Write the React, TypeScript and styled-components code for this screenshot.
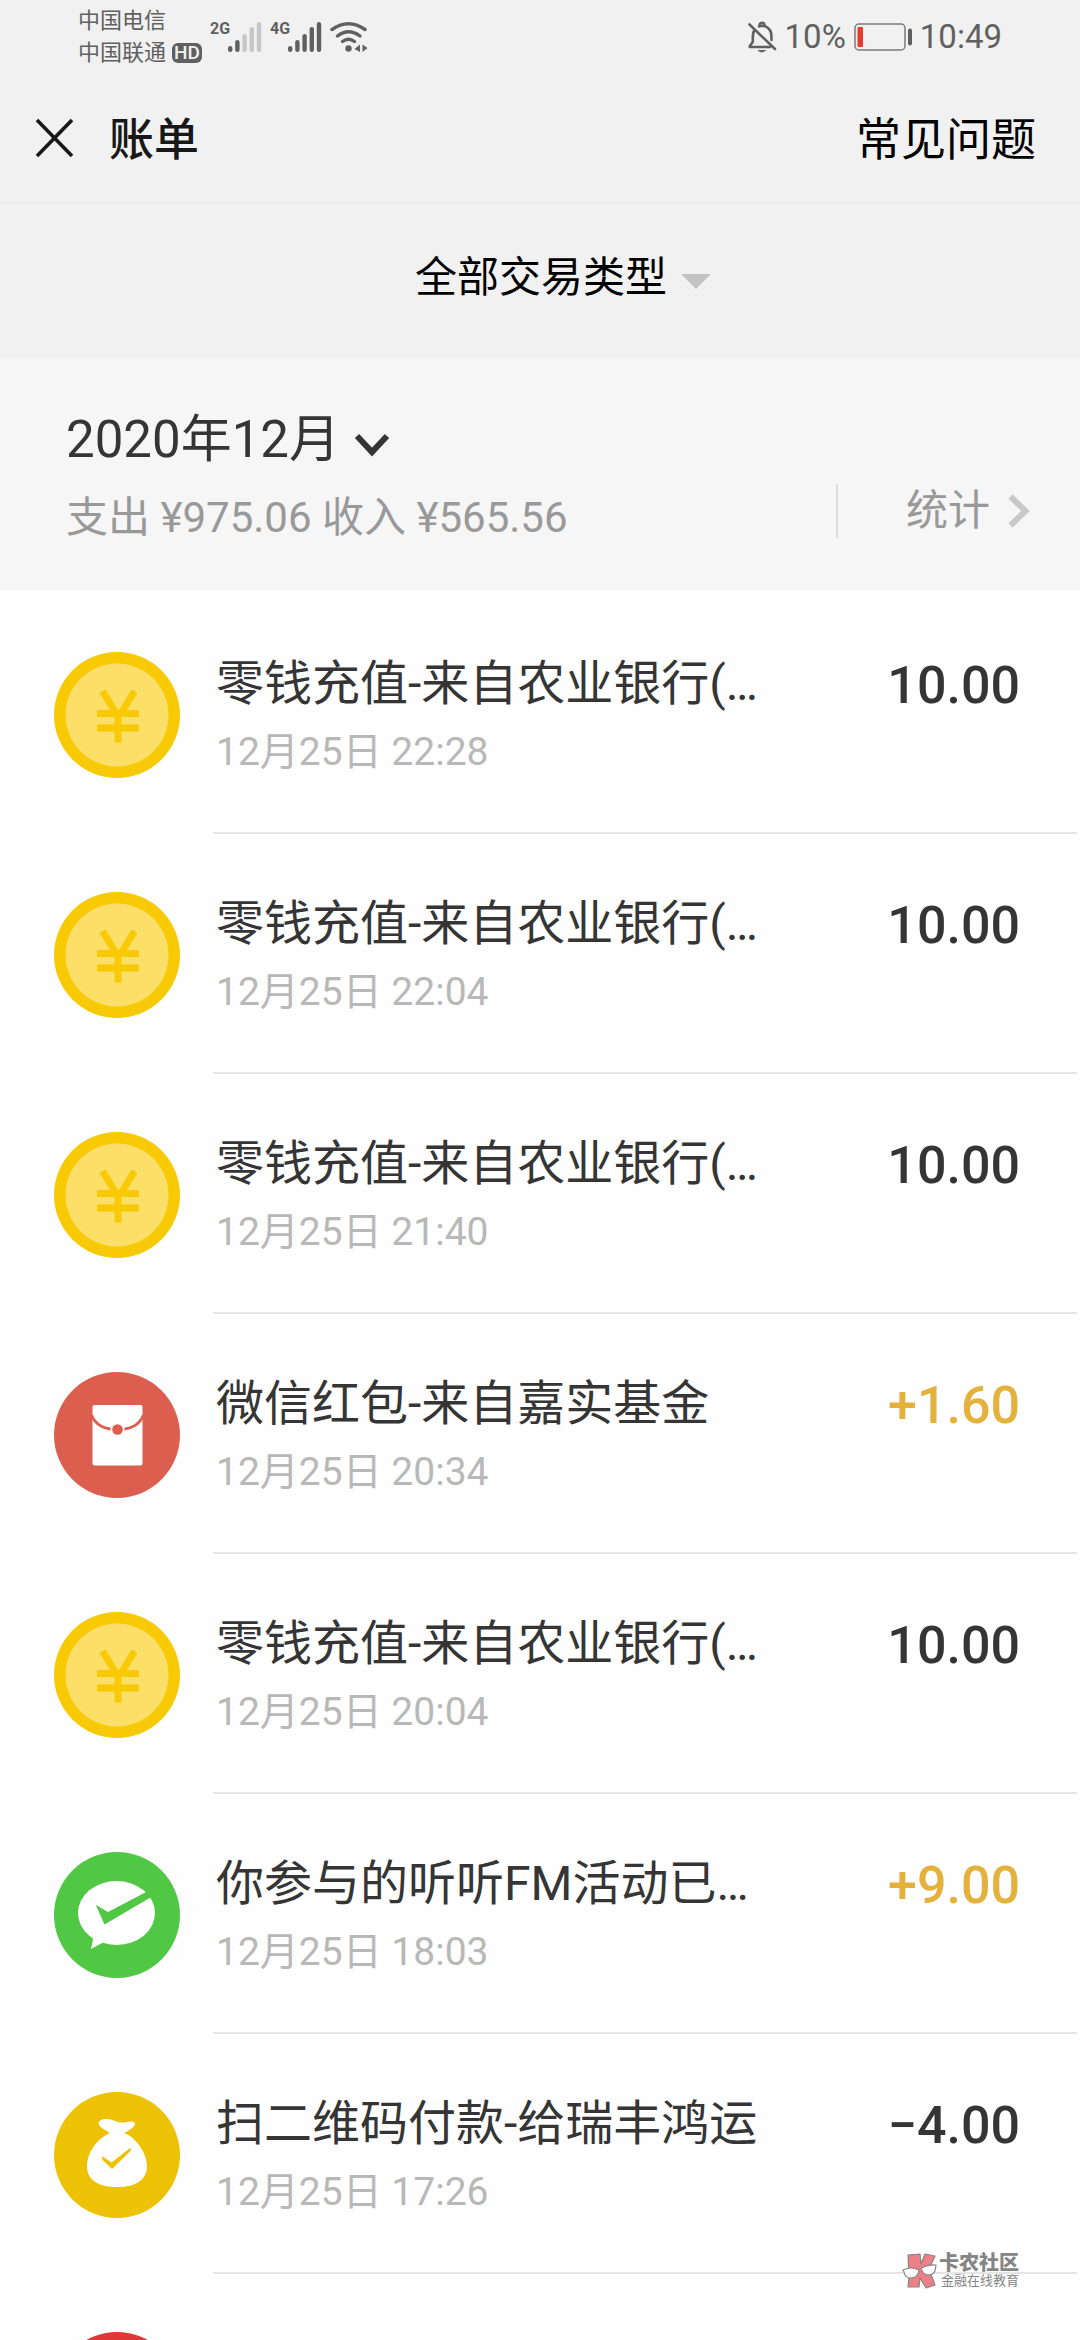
import React from "react";
import styled, { createGlobalStyle } from "styled-components";

const GlobalStyle = createGlobalStyle`
  * { box-sizing: border-box; }
  html, body { margin: 0; padding: 0; background: #fefefe; }
  body {
    font-family: Roboto, "Noto Sans CJK SC", sans-serif;
    color: #353535;
  }
  button {
    margin: 0;
    padding: 0;
    border: 0;
    background: none;
    font: inherit;
    color: inherit;
    cursor: pointer;
  }
`;

const Screen = styled.div`
  position: relative;
  display: flex;
  flex-direction: column;
  height: 100vh;
  overflow: hidden;
`;

/* ---------- status bar ---------- */

const StatusBar = styled.div`
  display: flex;
  align-items: center;
  justify-content: space-between;
  height: 74px;
  padding: 0 78px;
  background: #f1f1f1;
  color: #606060;
`;

const StatusGroup = styled.div<{ $gap: number }>`
  display: flex;
  align-items: center;
  gap: ${(p) => p.$gap}px;
`;

const Carriers = styled.div`
  display: flex;
  flex-direction: column;
  font-size: 22px;
  line-height: 32px;
`;

const CarrierLine = styled.div`
  display: flex;
  align-items: center;
  gap: 6px;
`;

const HdBadge = styled.span`
  width: 30px;
  border-radius: 6px;
  background: #606060;
  color: #f1f1f1;
  font-size: 19px;
  font-weight: 500;
  line-height: 20px;
  text-align: center;
`;

const Signal = styled.div`
  display: flex;
  align-items: flex-start;
`;

const NetworkLabel = styled.span`
  width: 18px;
  font-size: 16px;
  font-weight: 700;
  line-height: 16px;
`;

const StatusText = styled.span`
  font-size: 33px;
  line-height: 40px;
`;

function SignalBars({ level }: { level: number }) {
  const tops = [25, 19, 13, 6, 1];
  return (
    <svg width="34" height="32" viewBox="0 0 34 32" aria-hidden="true">
      {tops.map((top, i) => (
        <rect
          key={top}
          x={i * 7.2}
          y={top}
          width="4.4"
          height={31 - top}
          rx="2.2"
          fill={i < level ? "#606060" : "#c6c6c6"}
        />
      ))}
    </svg>
  );
}

function WifiIcon() {
  return (
    <svg width="38" height="32" viewBox="0 0 38 32" fill="none" stroke="#606060" strokeWidth="3.400" strokeLinecap="round" aria-hidden="true">
      <path d="M2 8.500Q18.500 -3 35 8.500" />
      <path d="M7.500 15Q18.500 6.500 30 15" />
      <path d="M12.500 20.500Q18.500 16 24.500 20.500" />
      <circle cx="18.500" cy="27.500" r="3.200" fill="#606060" stroke="none" />
      <path d="M24.500 28L30 23.500V31ZM32.500 23.500L37.500 27L32.500 31Z" fill="#606060" stroke="none" />
    </svg>
  );
}

function MutedBellIcon() {
  return (
    <svg width="29" height="32" viewBox="0 0 29 32" fill="none" stroke="#606060" strokeWidth="2.600" strokeLinecap="round" strokeLinejoin="round" aria-hidden="true">
      <path d="M1.500 3.500L27 28" />
      <path d="M6 10C4.800 12 4.800 14 4.800 17V21L1.800 25V26H22" />
      <path d="M11 5.500C12.500 4.600 17.500 4.600 20 7C23.500 10 23.500 13 23.500 19" />
      <path d="M11.500 4.500C11.500 1 16.500 1 16.500 4.500" />
      <path d="M10.500 29.500H17.500L14 31Z" strokeWidth="1" fill="#606060" />
    </svg>
  );
}

function BatteryIcon() {
  return (
    <svg width="58" height="28" viewBox="0 0 58 28" fill="none" aria-hidden="true">
      <rect x="1" y="1" width="50" height="26" rx="4" stroke="#7a7a7a" strokeWidth="1.500" />
      <rect x="3.500" y="4" width="5.500" height="20" rx="1" fill="#e53a2c" />
      <rect x="54" y="5.500" width="4" height="17" rx="2" fill="#606060" />
    </svg>
  );
}

/* ---------- navigation ---------- */

const NavBar = styled.header`
  display: flex;
  align-items: center;
  height: 130px;
  padding: 0 44px 0 35px;
  border-bottom: 2px solid #ececec;
  background: #f1f1f1;
`;

const CloseButton = styled.button`
  display: flex;
`;

const Title = styled.h1`
  flex: 1;
  margin: 0 0 0 35px;
  padding-top: 5px;
  color: #181818;
  font-size: 45px;
  font-weight: 500;
  line-height: 60px;
`;

const HelpButton = styled.button`
  padding-top: 5px;
  color: #000;
  font-size: 45px;
  line-height: 60px;
`;

const FilterBar = styled.div`
  display: flex;
  align-items: center;
  justify-content: center;
  height: 154px;
  padding: 0 0 6px 46px;
  background: #f1f1f1;
`;

const FilterButton = styled.button`
  display: flex;
  align-items: center;
  gap: 14px;
  color: #000;
  font-size: 42px;
  line-height: 56px;

  svg {
    margin-top: 6px;
  }
`;

/* ---------- month summary ---------- */

const Summary = styled.section`
  display: flex;
  align-items: flex-end;
  justify-content: space-between;
  height: 232px;
  padding: 0 50px 40px 66px;
  background: #f6f6f6;
`;

const MonthButton = styled.button`
  display: flex;
  align-items: center;
  gap: 14px;
  margin-bottom: 8px;
  color: #353535;
  font-size: 51px;
  line-height: 76px;

  svg {
    margin-top: 10px;
  }
`;

const Totals = styled.p`
  margin: 0;
  color: #999;
  font-size: 42px;
  line-height: 64px;
`;

const StatsButton = styled.button`
  display: flex;
  align-items: center;
  gap: 18px;
  height: 54px;
  margin-bottom: 12px;
  padding-left: 68px;
  border-left: 2px solid #dcdcdc;
  color: #999;
  font-size: 42px;
  line-height: 54px;
`;

/* ---------- bill list ---------- */

const List = styled.ul`
  flex: 1;
  margin: 0;
  padding: 4px 3px 0 54px;
  overflow: hidden;
  background: #fefefe;
  list-style: none;
`;

const Row = styled.li`
  display: flex;
  gap: 33px;
  height: 240px;
`;

const IconSlot = styled.div`
  display: flex;
  padding-top: 58px;
`;

const RowBody = styled.div`
  display: flex;
  flex: 1;
  justify-content: space-between;
  min-width: 0;
  padding: 58px 57px 0 3px;
  border-bottom: 2px solid #e5e5e5;
`;

const Name = styled.h2`
  margin: 0;
  color: #353535;
  font-size: 48px;
  font-weight: 400;
  line-height: 64px;
  white-space: nowrap;
`;

const Time = styled.time`
  display: block;
  margin-top: 4px;
  color: #b8b8b8;
  font-size: 39px;
  line-height: 64px;
`;

const Amount = styled.span<{ $income: boolean }>`
  color: ${(p) => (p.$income ? "#e3b13c" : "#353535")};
  font-size: 52px;
  font-weight: 500;
  line-height: 68px;
`;

/* ---------- watermark ---------- */

const Watermark = styled.div`
  position: absolute;
  right: 61px;
  bottom: 51px;
  display: flex;
  align-items: center;
  gap: 1px;
  color: #858585;
`;

const WatermarkText = styled.div`
  display: flex;
  flex-direction: column;
  align-items: flex-end;
`;

const WatermarkName = styled.strong`
  font-size: 20px;
  font-weight: 900;
  line-height: 20px;
`;

const WatermarkSlogan = styled.span`
  font-size: 13px;
  line-height: 16px;
`;

type IconKind = "coin" | "packet" | "chat" | "bag" | "red";

const discColors: Record<IconKind, string> = {
  coin: "#f8ca06",
  packet: "#dc5e4e",
  chat: "#50c844",
  bag: "#edc205",
  red: "#e03838",
};

function BillIcon({ kind }: { kind: IconKind }) {
  const color = discColors[kind];
  return (
    <svg width="126" height="126" viewBox="0 0 126 126" aria-hidden="true">
      <circle cx="63" cy="63" r="63" fill={color} />
      {kind === "coin" && (
        <>
          <circle cx="63" cy="63" r="51.5" fill="#fbdf69" />
          <g fill="none" stroke={color} strokeWidth="7">
            <path d="M48.500 39L62 61.500M80.500 39L67 61.500M64 60V90.500" />
            <path d="M43 61.500H85M43 76H85" />
          </g>
        </>
      )}
      {kind === "packet" && (
        <>
          <rect x="38.500" y="33" width="50" height="60.500" rx="2" fill="#fff" />
          <path d="M37.500 43C41 52 50 57.500 63.500 57.500S86 52 89.500 43" fill="none" stroke={color} strokeWidth="2.800" />
          <circle cx="63.500" cy="57.500" r="7" fill="#fff" />
          <circle cx="63.500" cy="57.500" r="5.300" fill={color} />
        </>
      )}
      {kind === "chat" && (
        <>
          <ellipse cx="62.500" cy="61" rx="38.500" ry="32" fill="#fff" />
          <path d="M38.500 84C39.500 88 38 92 37 97L50 90Z" fill="#fff" />
          <path d="M41.800 53L54 60L94 39L99 44L50.500 72.500Z" fill={color} />
        </>
      )}
      {kind === "bag" && (
        <>
          <path d="M56 41C51 37 45 36 44.500 31C46 26 55 26 61 29C66 31 69 31 73 30C78 28.500 82 30 81 33C78 37 74 39 70 41C83 46 93 62 93 74C93 88 82 95 63 95S33 88 33 74C33 62 42 47 56 41Z" fill="#fff" />
          <path d="M48 64L57.500 70.500L75.500 56.500Q78 56 76.500 59L58 77L48.500 68Z" fill={color} />
        </>
      )}
    </svg>
  );
}

interface Bill {
  kind: IconKind;
  name: string;
  time: string;
  amount: string;
}

const bills: Bill[] = [
  { kind: "coin", name: "零钱充值-来自农业银行(…", time: "12月25日 22:28", amount: "10.00" },
  { kind: "coin", name: "零钱充值-来自农业银行(…", time: "12月25日 22:04", amount: "10.00" },
  { kind: "coin", name: "零钱充值-来自农业银行(…", time: "12月25日 21:40", amount: "10.00" },
  { kind: "packet", name: "微信红包-来自嘉实基金", time: "12月25日 20:34", amount: "+1.60" },
  { kind: "coin", name: "零钱充值-来自农业银行(…", time: "12月25日 20:04", amount: "10.00" },
  { kind: "chat", name: "你参与的听听FM活动已…", time: "12月25日 18:03", amount: "+9.00" },
  { kind: "bag", name: "扫二维码付款-给瑞丰鸿运", time: "12月25日 17:26", amount: "−4.00" },
];

export default function App() {
  return (
    <>
      <GlobalStyle />
      <Screen>
        <StatusBar>
          <StatusGroup $gap={8}>
            <Carriers>
              <CarrierLine>中国电信</CarrierLine>
              <CarrierLine>
                中国联通<HdBadge>HD</HdBadge>
              </CarrierLine>
            </Carriers>
            <Signal>
              <NetworkLabel>2G</NetworkLabel>
              <SignalBars level={2} />
            </Signal>
            <Signal>
              <NetworkLabel>4G</NetworkLabel>
              <SignalBars level={5} />
            </Signal>
            <WifiIcon />
          </StatusGroup>
          <StatusGroup $gap={8}>
            <MutedBellIcon />
            <StatusText>10%</StatusText>
            <BatteryIcon />
            <StatusText>10:49</StatusText>
          </StatusGroup>
        </StatusBar>

        <NavBar>
          <CloseButton aria-label="关闭">
            <svg width="39" height="40" viewBox="0 0 39 40" stroke="#181818" strokeWidth="3.600" aria-hidden="true">
              <path d="M2 2L37 38M37 2L2 38" />
            </svg>
          </CloseButton>
          <Title>账单</Title>
          <HelpButton>常见问题</HelpButton>
        </NavBar>

        <FilterBar>
          <FilterButton>
            全部交易类型
            <svg width="30" height="15" viewBox="0 0 30 15" aria-hidden="true">
              <path d="M0 0H30L15 15Z" fill="#c3c3c3" />
            </svg>
          </FilterButton>
        </FilterBar>

        <Summary>
          <div>
            <MonthButton>
              2020年12月
              <svg width="36" height="26" viewBox="0 0 36 26" fill="none" stroke="#353535" strokeWidth="6" aria-hidden="true">
                <path d="M3 4L18 20L33 4" />
              </svg>
            </MonthButton>
            <Totals>支出 ¥975.06 收入 ¥565.56</Totals>
          </div>
          <StatsButton>
            统计
            <svg width="22" height="34" viewBox="0 0 22 34" fill="none" stroke="#c8c8c8" strokeWidth="6" aria-hidden="true">
              <path d="M2.500 2.500L17.500 17L2.500 31.500" />
            </svg>
          </StatsButton>
        </Summary>

        <List>
          {bills.map((bill) => (
            <Row key={bill.time}>
              <IconSlot>
                <BillIcon kind={bill.kind} />
              </IconSlot>
              <RowBody>
                <div>
                  <Name>{bill.name}</Name>
                  <Time>{bill.time}</Time>
                </div>
                <Amount $income={bill.amount.startsWith("+")}>{bill.amount}</Amount>
              </RowBody>
            </Row>
          ))}
          <Row>
            <IconSlot>
              <BillIcon kind="red" />
            </IconSlot>
          </Row>
        </List>

        <Watermark>
          <svg width="36" height="36" viewBox="0 0 36 36" stroke="#858585" strokeWidth="1.200" strokeLinejoin="round" aria-hidden="true">
            <path d="M6 2L18 1L19 11L23 1L33 3L27 16L33 32L24 35L18 25L17 34L6 34L7 24Z" fill="#ee7f86" />
            <path d="M1 17Q9 13 17 17Q16 25 9 25Q3 25 2 19ZM19 15Q27 11 34 12L33 18Q31 22 26 22Q20 21 19 15Z" fill="#fff" />
          </svg>
          <WatermarkText>
            <WatermarkName>卡农社区</WatermarkName>
            <WatermarkSlogan>金融在线教育</WatermarkSlogan>
          </WatermarkText>
        </Watermark>
      </Screen>
    </>
  );
}
